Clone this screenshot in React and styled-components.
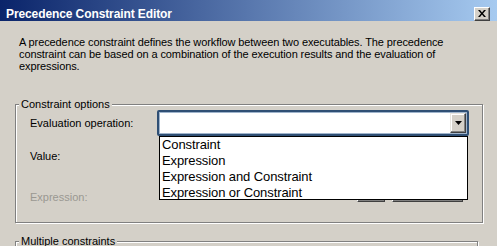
import React from "react";
import styled, { createGlobalStyle } from "styled-components";

const GlobalStyle = createGlobalStyle`
  body {
    margin: 0;
    background: #ffffff;
  }
`;

const Dialog = styled.div`
  width: 497px;
  height: 246px;
  background: #d4d0c8;
  display: flex;
  flex-direction: column;
  overflow: hidden;
  font-family: "Liberation Sans", Arial, sans-serif;
  font-size: 11px;
  color: #000;
`;

const TitleBar = styled.div`
  height: 21px;
  box-sizing: border-box;
  padding: 6px 7px 0 6px;
  display: flex;
  align-items: center;
  justify-content: space-between;
  background: linear-gradient(to right, #0a246a, #a6caf0);
  flex-shrink: 0;
`;

const Title = styled.span`
  color: #fff;
  font-weight: bold;
  font-size: 12px;
  letter-spacing: -0.1px;
`;

const CloseButton = styled.div`
  width: 16px;
  height: 14px;
  box-sizing: border-box;
  background: #d4d0c8;
  border-top: 1px solid #fff;
  border-left: 1px solid #fff;
  border-right: 1px solid #404040;
  border-bottom: 1px solid #404040;
  box-shadow: inset -1px -1px 0 #808080;
  display: flex;
  align-items: center;
  justify-content: center;
`;

const Description = styled.p`
  margin: 15px 0 0 19px;
  line-height: 12px;
  white-space: nowrap;
  letter-spacing: -0.1px;
`;

const Group = styled.fieldset`
  margin: ${(p) => p.$top}px 0 0 15px;
  width: 463px;
  box-sizing: border-box;
  padding: 0 13px ${(p) => p.$bottom}px 14px;
  border: 1px solid #808080;
  box-shadow: inset 1px 1px 0 #fff, 1px 1px 0 #fff;
  flex-shrink: 0;
`;

const Legend = styled.legend`
  padding: 0 2px;
  margin-left: -11px;
  line-height: 12px;
  background: #d4d0c8;
`;

const Row = styled.div`
  display: flex;
  align-items: ${(p) => p.$align || "center"};
  height: ${(p) => p.$h}px;
  margin-top: ${(p) => p.$gap || 0}px;
`;

const Label = styled.div`
  width: 127px;
  flex-shrink: 0;
  line-height: 12px;
  color: ${(p) => (p.$disabled ? "#9a9892" : "#000")};
  margin-bottom: ${(p) => p.$lift || 0}px;
`;

const ComboWrap = styled.div`
  position: relative;
  width: 312px;
  height: 26px;
`;

const ComboBox = styled.div`
  height: 100%;
  box-sizing: border-box;
  background: #fff;
  border: 2px solid #2f4f74;
  border-radius: 2px;
  box-shadow: inset 0 0 0 1px #9fb4cc;
  display: flex;
  justify-content: flex-end;
  align-items: center;
  padding-right: 1px;
`;

const DropButton = styled.div`
  width: 16px;
  height: 20px;
  box-sizing: border-box;
  background: #d4d0c8;
  border-top: 1px solid #e8e6e0;
  border-left: 1px solid #e8e6e0;
  border-right: 1px solid #404040;
  border-bottom: 1px solid #404040;
  box-shadow: inset -1px -1px 0 #808080, inset 1px 1px 0 #fff;
  display: flex;
  align-items: center;
  justify-content: center;
`;

const DropList = styled.ul`
  position: absolute;
  left: 2px;
  top: 26px;
  width: 309px;
  height: 64px;
  box-sizing: border-box;
  margin: 0;
  padding: 0;
  list-style: none;
  background: #fff;
  border: 1px solid #000;
  z-index: 2;
`;

const Item = styled.li`
  height: 16px;
  line-height: 16px;
  padding-left: 2px;
  font-size: 13px;
  letter-spacing: -0.1px;
`;

const ButtonArea = styled.div`
  width: 312px;
  display: flex;
  justify-content: flex-end;
  gap: 7px;
  padding-right: 6px;
  box-sizing: border-box;
`;

const PushButton = styled.div`
  width: ${(p) => p.$w}px;
  height: 23px;
  box-sizing: border-box;
  background: #d4d0c8;
  border-top: 1px solid #fff;
  border-left: 1px solid #fff;
  border-right: 1px solid #404040;
  border-bottom: 1px solid #404040;
  box-shadow: inset -1px -1px 0 #808080;
  display: flex;
  align-items: center;
  justify-content: center;
  color: #9a9892;
`;

const options = [
  "Constraint",
  "Expression",
  "Expression and Constraint",
  "Expression or Constraint",
];

export default function App() {
  return (
    <>
      <GlobalStyle />
      <Dialog>
        <TitleBar>
          <Title>Precedence Constraint Editor</Title>
          <CloseButton>
            <svg width="8" height="7" viewBox="0 0 8 7">
              <path d="M0 0h2l2 2.5L6 0h2L5 3.5 8 7H6L4 4.5 2 7H0l3-3.5z" fill="#000" />
            </svg>
          </CloseButton>
        </TitleBar>

        <Description>
          A precedence constraint defines the workflow between two executables. The precedence
          <br />
          constraint can be based on a combination of the execution results and the evaluation of
          <br />
          expressions.
        </Description>

        <Group $top={26} $bottom={20}>
          <Legend>Constraint options</Legend>
          <Row $h={26}>
            <Label>Evaluation operation:</Label>
            <ComboWrap>
              <ComboBox>
                <DropButton>
                  <svg width="7" height="4" viewBox="0 0 7 4">
                    <path d="M0 0h7L3.5 4z" fill="#000" />
                  </svg>
                </DropButton>
              </ComboBox>
              <DropList>
                {options.map((o) => (
                  <Item key={o}>{o}</Item>
                ))}
              </DropList>
            </ComboWrap>
          </Row>
          <Row $h={24} $gap={8}>
            <Label>Value:</Label>
          </Row>
          <Row $h={25} $gap={9} $align="flex-end">
            <Label $disabled $lift={-1}>
              Expression:
            </Label>
            <ButtonArea>
              <PushButton $w={28}>...</PushButton>
              <PushButton $w={71}>Test</PushButton>
            </ButtonArea>
          </Row>
        </Group>

        <Group $top={12} $bottom={0}>
          <Legend>Multiple constraints</Legend>
        </Group>
      </Dialog>
    </>
  );
}
